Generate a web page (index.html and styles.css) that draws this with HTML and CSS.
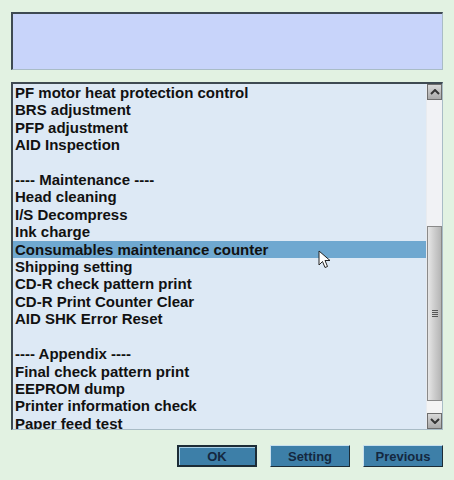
FILE: index.html
```html
<!DOCTYPE html>
<html lang="en">
<head>
    <meta charset="UTF-8">
    <title>Adjustment Program</title>
    <link rel="stylesheet" href="styles.css">
</head>
<body>
    <div class="janela">
        <div class="mensagem-box"></div>

        <div class="lista-box">
            <ul class="lista">
                <li>PF motor heat protection control</li>
                <li>BRS adjustment</li>
                <li>PFP adjustment</li>
                <li>AID Inspection</li>
                <li>&nbsp;</li>
                <li>---- Maintenance ----</li>
                <li>Head cleaning</li>
                <li>I/S Decompress</li>
                <li>Ink charge</li>
                <li class="selecionado">Consumables maintenance counter</li>
                <li>Shipping setting</li>
                <li>CD-R check pattern print</li>
                <li>CD-R Print Counter Clear</li>
                <li>AID SHK Error Reset</li>
                <li>&nbsp;</li>
                <li>---- Appendix ----</li>
                <li>Final check pattern print</li>
                <li>EEPROM dump</li>
                <li>Printer information check</li>
                <li>Paper feed test</li>
            </ul>
            <div class="rolagem">
                <div class="seta">
                    <svg width="10" height="6" viewBox="0 0 10 6"><path d="M1 5 L5 1 L9 5" fill="none" stroke="#333" stroke-width="2"/></svg>
                </div>
                <div class="trilho-topo"></div>
                <div class="polegar">
                    <span class="grip"></span>
                </div>
                <div class="trilho-base"></div>
                <div class="seta">
                    <svg width="10" height="6" viewBox="0 0 10 6"><path d="M1 1 L5 5 L9 1" fill="none" stroke="#333" stroke-width="2"/></svg>
                </div>
            </div>
            <svg class="cursor" width="14" height="20" viewBox="0 0 14 20">
                <path d="M1 1 L1 15 L4.5 11.5 L7 17.5 L9.5 16.5 L7 10.5 L12 10.5 Z" fill="#fff" stroke="#222" stroke-width="1"/>
            </svg>
        </div>

        <div class="botoes">
            <button class="botao foco">OK</button>
            <button class="botao">Setting</button>
            <button class="botao">Previous</button>
        </div>
    </div>
</body>
</html>
```

FILE: styles.css
```css
* {
    box-sizing: border-box;
    margin: 0;
    padding: 0;
}

body {
    background-color: #e2f2e2;
    font-family: "Liberation Sans", Arial, sans-serif;
    width: 454px;
    height: 480px;
    overflow: hidden;
}

.janela {
    padding: 12px 11px 0 11px;
}

.mensagem-box {
    height: 58px;
    background-color: #c8d4fa;
    border-top: 2px solid #3e4a52;
    border-left: 2px solid #3e4a52;
    border-right: 1px solid #a9bcc6;
    border-bottom: 1px solid #a9bcc6;
}

.lista-box {
    position: relative;
    display: flex;
    margin-top: 12px;
    height: 348px;
    background-color: #dde9f5;
    border-top: 2px solid #3e4a52;
    border-left: 2px solid #3e4a52;
    border-right: 1px solid #a9bcc6;
    border-bottom: 1px solid #a9bcc6;
    overflow: hidden;
}

.lista {
    flex: 1;
    list-style: none;
    font-size: 15px;
    font-weight: bold;
    color: #111;
    line-height: 17.4px;
}

.lista li {
    padding-left: 2px;
    white-space: nowrap;
}

.lista li.selecionado {
    background-color: #6fa8d0;
}

.rolagem {
    width: 16px;
    display: flex;
    flex-direction: column;
    background-color: #f1f2f5;
    border-left: 1px solid #e8ebef;
}

.seta {
    height: 16px;
    display: flex;
    align-items: center;
    justify-content: center;
    background: linear-gradient(#d8d8d8, #a9a9a9);
    border: 1px solid #6d6d6d;
}

.trilho-topo {
    height: 126px;
}

.polegar {
    height: 175px;
    display: flex;
    align-items: center;
    justify-content: center;
    background: linear-gradient(90deg, #e6e6e6, #cfcfcf 45%, #b5b5b5);
    border: 1px solid #8a8a8a;
}

.grip {
    width: 6px;
    height: 7px;
    background: repeating-linear-gradient(#555 0 1px, transparent 1px 2px);
}

.trilho-base {
    flex: 1;
    background-color: #f4f4f4;
}

.cursor {
    position: absolute;
    left: 305px;
    top: 166px;
}

.botoes {
    display: flex;
    justify-content: flex-end;
    gap: 13px;
    margin-top: 15px;
}

.botao {
    width: 80px;
    height: 22px;
    background-color: #3d7fa8;
    color: #142840;
    font-family: "Liberation Sans", Arial, sans-serif;
    font-size: 13px;
    font-weight: bold;
    border-top: 1px solid #c8e0ee;
    border-left: 1px solid #c8e0ee;
    border-right: 1px solid #1c2c36;
    border-bottom: 1px solid #1c2c36;
}

.botao.foco {
    border: 2px solid #1c2c36;
    box-shadow: inset 1px 1px 0 #a9d0e6;
}
```
